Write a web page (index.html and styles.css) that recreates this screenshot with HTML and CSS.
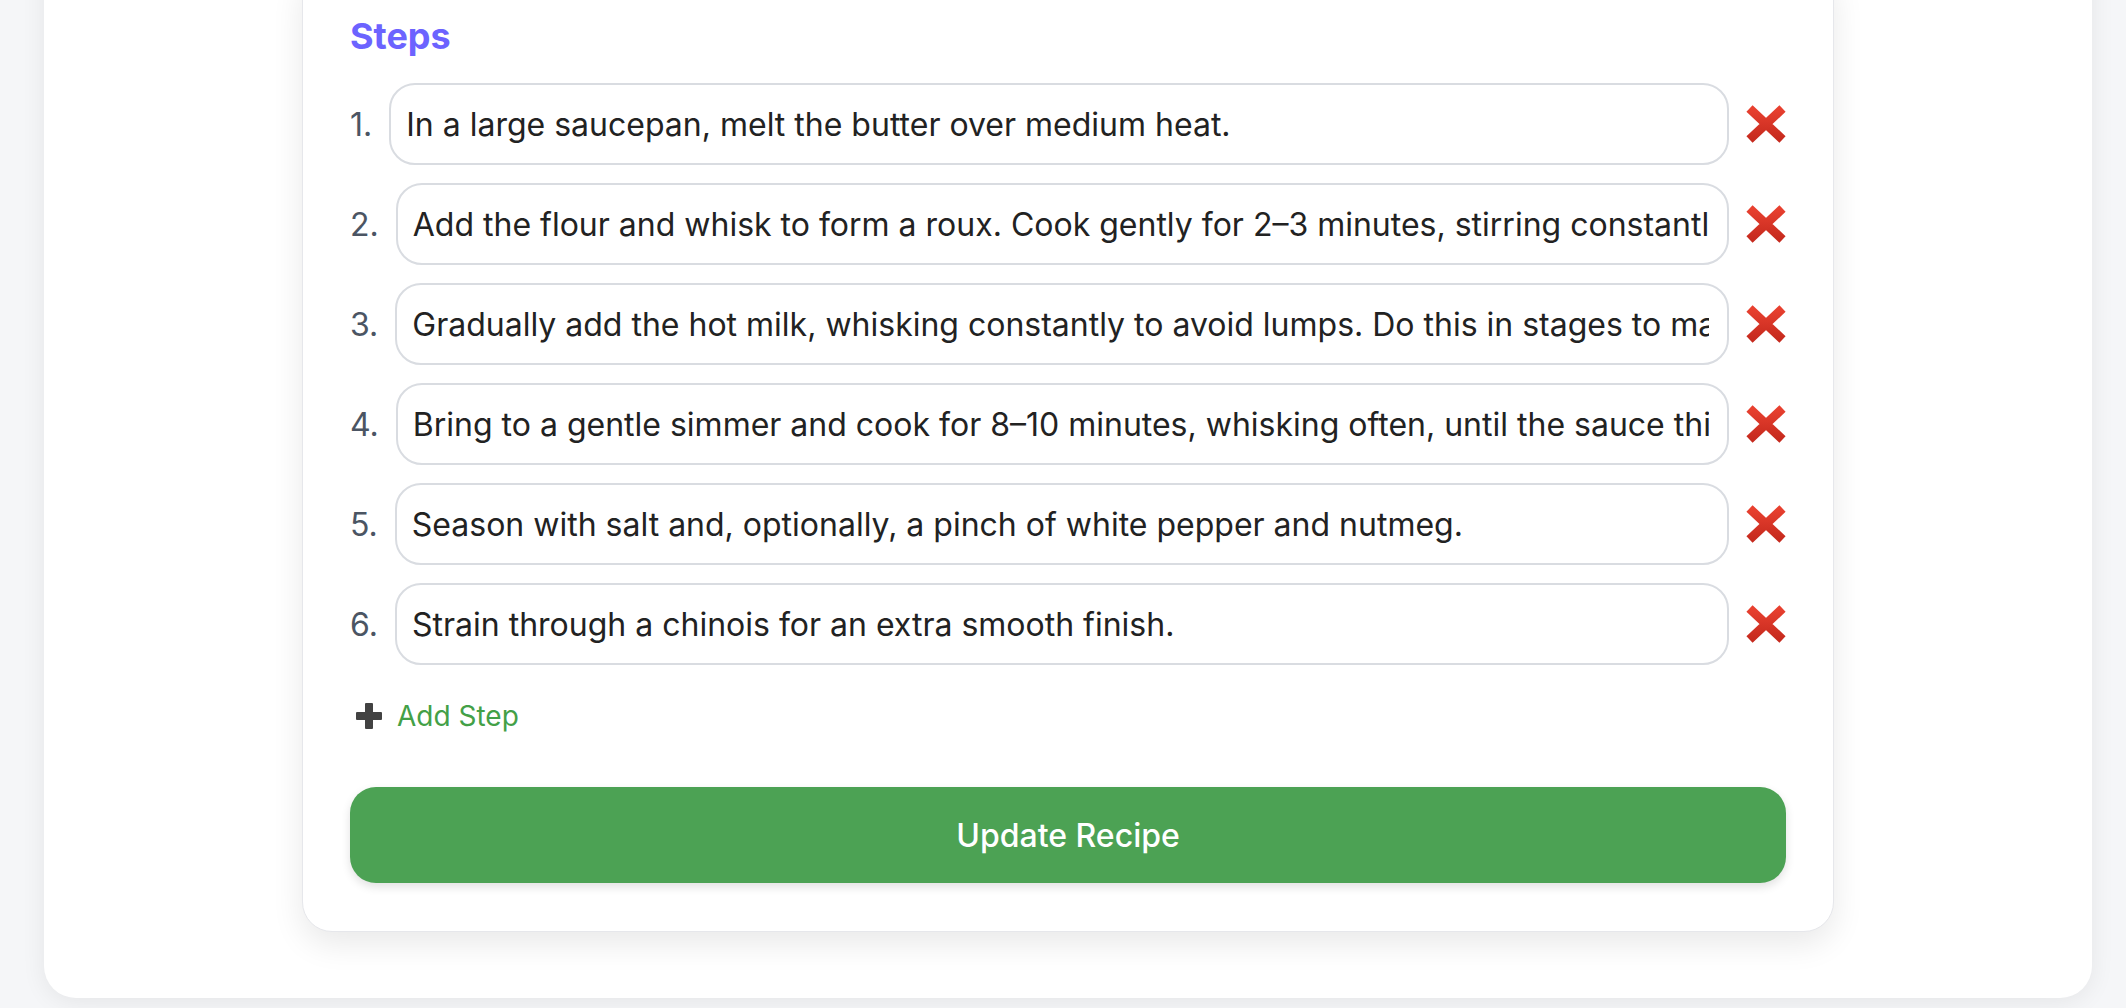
FILE: index.html
```html
<!DOCTYPE html>
<html lang="en">
<head>
<meta charset="utf-8">
<title>Edit Recipe</title>
<link rel="stylesheet" href="styles.css">
</head>
<body>
<div class="page">
  <main class="outer">
    <section class="card">
      <h2 class="section-title">Steps</h2>
      <ol class="steps">
        <li class="step"><span class="num">1.</span><input class="step-input" type="text" value="In a large saucepan, melt the butter over medium heat."><button class="remove" type="button" aria-label="Remove step"><svg viewBox="0 0 40 38" width="40" height="38"><defs><linearGradient id="xg" x1="0" y1="0" x2="0" y2="1"><stop offset="0" stop-color="#e8402f"/><stop offset="1" stop-color="#c62a1e"/></linearGradient></defs><path d="M3.5 3.5 L36.5 34.5 M36.5 3.5 L3.5 34.5" stroke="url(#xg)" stroke-width="9" fill="none"/></svg></button></li>
        <li class="step"><span class="num">2.</span><input class="step-input" type="text" value="Add the flour and whisk to form a roux. Cook gently for 2–3 minutes, stirring constantly, without letting it brown."><button class="remove" type="button" aria-label="Remove step"><svg viewBox="0 0 40 38" width="40" height="38"><path d="M3.5 3.5 L36.5 34.5 M36.5 3.5 L3.5 34.5" stroke="url(#xg)" stroke-width="9" fill="none"/></svg></button></li>
        <li class="step"><span class="num">3.</span><input class="step-input" type="text" value="Gradually add the hot milk, whisking constantly to avoid lumps. Do this in stages to maintain a smooth texture."><button class="remove" type="button" aria-label="Remove step"><svg viewBox="0 0 40 38" width="40" height="38"><path d="M3.5 3.5 L36.5 34.5 M36.5 3.5 L3.5 34.5" stroke="url(#xg)" stroke-width="9" fill="none"/></svg></button></li>
        <li class="step"><span class="num">4.</span><input class="step-input" type="text" value="Bring to a gentle simmer and cook for 8–10 minutes, whisking often, until the sauce thickens."><button class="remove" type="button" aria-label="Remove step"><svg viewBox="0 0 40 38" width="40" height="38"><path d="M3.5 3.5 L36.5 34.5 M36.5 3.5 L3.5 34.5" stroke="url(#xg)" stroke-width="9" fill="none"/></svg></button></li>
        <li class="step"><span class="num">5.</span><input class="step-input" type="text" value="Season with salt and, optionally, a pinch of white pepper and nutmeg."><button class="remove" type="button" aria-label="Remove step"><svg viewBox="0 0 40 38" width="40" height="38"><path d="M3.5 3.5 L36.5 34.5 M36.5 3.5 L3.5 34.5" stroke="url(#xg)" stroke-width="9" fill="none"/></svg></button></li>
        <li class="step"><span class="num">6.</span><input class="step-input" type="text" value="Strain through a chinois for an extra smooth finish."><button class="remove" type="button" aria-label="Remove step"><svg viewBox="0 0 40 38" width="40" height="38"><path d="M3.5 3.5 L36.5 34.5 M36.5 3.5 L3.5 34.5" stroke="url(#xg)" stroke-width="9" fill="none"/></svg></button></li>
      </ol>
      <button class="add-step" type="button"><svg class="plus" viewBox="0 0 26 26" width="26" height="26"><rect x="9" y="0" width="8" height="26" rx="1" fill="#424242"/><rect x="0" y="9" width="26" height="8" rx="1" fill="#424242"/></svg><span>Add Step</span></button>
      <button class="submit" type="submit">Update Recipe</button>
    </section>
  </main>
</div>
</body>
</html>
```

FILE: styles.css
```css
* { box-sizing: border-box; }

html, body {
  margin: 0;
  padding: 0;
  background: #f5f6f8;
  font-family: Inter, "Noto Sans", "Liberation Sans", sans-serif;
  overflow: hidden;
}

.page {
  padding: 0 34px 10px 44px;
}

.outer {
  margin-top: -75px;
  background: #ffffff;
  border-radius: 32px;
  box-shadow: 0 4px 24px rgba(0, 0, 0, 0.07);
  padding: 40px 32px 66px;
}

.card {
  max-width: 1532px;
  margin: 0 auto;
  background: #ffffff;
  border: 1px solid #e6e7eb;
  border-radius: 30px;
  box-shadow: 0 12px 32px rgba(0, 0, 0, 0.09);
  padding: 48px 47px 48px;
  display: flex;
  flex-direction: column;
}

.section-title {
  margin: 0 0 25px;
  font-size: 36px;
  line-height: 44px;
  font-weight: 700;
  color: #6c63ff;
}

.steps {
  list-style: none;
  margin: 0;
  padding: 0;
  display: flex;
  flex-direction: column;
  gap: 18px;
}

.step {
  display: flex;
  align-items: center;
  gap: 17px;
}

.num {
  font-size: 32px;
  color: #4b5563;
}

.step-input {
  flex: 1;
  min-width: 0;
  height: 82px;
  padding: 0 18px 0 15px;
  border: 2px solid #d9dce1;
  border-radius: 26px;
  font-family: inherit;
  font-size: 32px;
  color: #222222;
  background: #ffffff;
  outline: none;
}

.remove {
  border: none;
  background: none;
  padding: 0;
  width: 40px;
  height: 38px;
  display: flex;
  cursor: pointer;
}

.add-step {
  align-self: flex-start;
  margin-top: 34px;
  border: none;
  background: none;
  padding: 0;
  display: flex;
  align-items: center;
  gap: 15px;
  font-family: inherit;
  font-size: 28px;
  line-height: 34px;
  color: #43a047;
  cursor: pointer;
}

.plus {
  margin-left: 6px;
}

.submit {
  margin-top: 54px;
  height: 96px;
  border: none;
  border-radius: 26px;
  background: #4ca254;
  color: #ffffff;
  font-family: inherit;
  font-size: 32px;
  font-weight: 500;
  box-shadow: 0 4px 10px rgba(0, 0, 0, 0.12);
  cursor: pointer;
}
```
